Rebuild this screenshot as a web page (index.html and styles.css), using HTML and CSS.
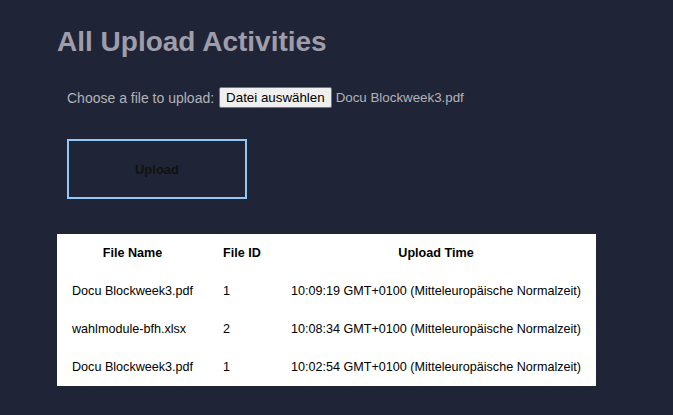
FILE: index.html
```html
<!DOCTYPE html>
<html lang="de">
<head>
<meta charset="utf-8">
<title>All Upload Activities</title>
<link rel="stylesheet" href="styles.css">
</head>
<body>
<main class="page">
  <h1 class="title">All Upload Activities</h1>
  <div class="file-row">
    <span class="file-label">Choose a file to upload:</span>
    <span class="file-btn">Datei auswählen</span>
    <span class="file-name">Docu Blockweek3.pdf</span>
  </div>
  <button class="upload-btn" type="button">Upload</button>
  <table class="uploads">
    <thead>
      <tr><th>File Name</th><th>File ID</th><th>Upload Time</th></tr>
    </thead>
    <tbody>
      <tr><td>Docu Blockweek3.pdf</td><td>1</td><td>10:09:19 GMT+0100 (Mitteleuropäische Normalzeit)</td></tr>
      <tr><td>wahlmodule-bfh.xlsx</td><td>2</td><td>10:08:34 GMT+0100 (Mitteleuropäische Normalzeit)</td></tr>
      <tr><td>Docu Blockweek3.pdf</td><td>1</td><td>10:02:54 GMT+0100 (Mitteleuropäische Normalzeit)</td></tr>
    </tbody>
  </table>
</main>
</body>
</html>
```
FILE: styles.css
```css
html, body {
  margin: 0;
  padding: 0;
  background: #1f2536;
  font-family: "Liberation Sans", Arial, sans-serif;
}
.page {
  padding: 26px 57px 20px;
}
.title {
  margin: 0;
  font-size: 28px;
  font-weight: bold;
  color: #a09dab;
  line-height: 32px;
}
.file-row {
  display: flex;
  align-items: center;
  margin: 29px 0 0 10px;
  font-size: 14px;
  color: #b3b3b9;
}
.file-btn {
  margin: 0 4px 0 5px;
  padding: 1px 6px;
  height: 17px;
  line-height: 17px;
  background: #efefef;
  color: #000;
  border: 1px solid #767676;
  border-radius: 2px;
  font-size: 13.33px;
}
.file-name {
  font-size: 13.33px;
}
.upload-btn {
  display: block;
  margin: 31px 0 0 10px;
  width: 180px;
  height: 60px;
  padding: 0;
  background: transparent;
  border: 2px solid #90c8f8;
  font-family: "Liberation Sans", Arial, sans-serif;
  font-size: 13px;
  font-weight: bold;
  color: #111;
}
.uploads {
  margin-top: 35px;
  background: #fff;
  border-collapse: collapse;
  font-size: 12.6px;
  color: #000;
  white-space: nowrap;
}
.uploads th, .uploads td {
  padding: 12px 15px;
  line-height: 14px;
  text-align: left;
}
.uploads th {
  text-align: center;
  font-weight: bold;
}
.uploads th:nth-child(2) { text-align: left; }
```
